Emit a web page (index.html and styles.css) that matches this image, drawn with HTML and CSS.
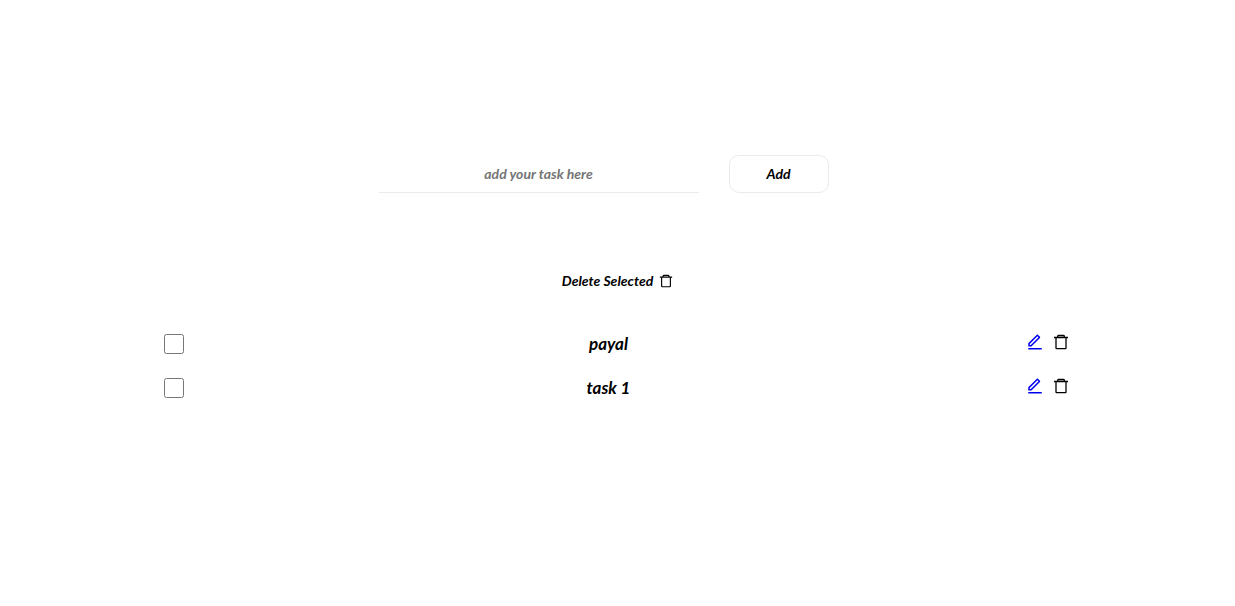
FILE: index.html
```
<!DOCTYPE html>
<html lang="en">
<head>
<meta charset="utf-8">
<title>Tasks</title>
<link rel="stylesheet" href="styles.css">
</head>
<body>
<svg class="sprite" aria-hidden="true">
  <symbol id="trash" viewBox="0 0 16 16"><path fill="none" stroke="currentColor" stroke-width="1.3" stroke-linejoin="round" d="M1 3.5H15M4.7 3.5V2.2Q4.7 1.5 5.4 1.5H10.6Q11.3 1.5 11.3 2.2V3.5M3 3.5V14Q3 14.6 3.6 14.6H12.4Q13 14.6 13 14V3.5"/></symbol>
  <symbol id="edit" viewBox="0 0 24 24"><path d="M6.414 16L16.556 5.858L15.142 4.444L5 14.586V16H6.414ZM7.243 18H3V13.757L14.435 2.322C14.826 1.932 15.459 1.932 15.849 2.322L18.678 5.151C19.068 5.541 19.068 6.174 18.678 6.565L7.243 18ZM3 20H21V22H3V20Z"/></symbol>
</svg>
<main class="page">
  <form class="add-form">
    <input class="task-input" type="text" placeholder="add your task here" aria-label="Task">
    <button class="add-button" type="button">Add</button>
  </form>
  <button class="delete-selected" type="button">Delete Selected <svg class="icon-small"><use href="#trash"/></svg></button>
  <ul class="tasks">
    <li class="task">
      <input class="check" id="task-a" type="checkbox">
      <label class="name" for="task-a">payal</label>
      <span class="actions">
        <a class="edit" href="#" aria-label="Edit payal"><svg class="icon"><use href="#edit"/></svg></a>
        <button class="delete" type="button" aria-label="Delete payal"><svg class="icon-bin"><use href="#trash"/></svg></button>
      </span>
    </li>
    <li class="task">
      <input class="check" id="task-b" type="checkbox">
      <label class="name" for="task-b">task 1</label>
      <span class="actions">
        <a class="edit" href="#" aria-label="Edit task 1"><svg class="icon"><use href="#edit"/></svg></a>
        <button class="delete" type="button" aria-label="Delete task 1"><svg class="icon-bin"><use href="#trash"/></svg></button>
      </span>
    </li>
  </ul>
</main>
</body>
</html>
```
FILE: styles.css
```
* { box-sizing: border-box; }
body { margin: 0; background: #fff; color: #000; font: italic 700 17px/20px Lato, sans-serif; }
button, input { font: inherit; color: inherit; }
button { padding: 0; border: 0; background: none; }
.sprite { display: none; }
.page { display: flex; flex-direction: column; align-items: center; padding-top: 155px; }
.add-form { display: flex; gap: 30px; margin-right: 28px; }
.task-input { width: 320px; height: 38px; padding: 0; border: 0; border-bottom: 1px solid #ebebeb; text-align: center; font-size: 14px; outline: none; }
.task-input::placeholder { color: #757575; }
.add-button { width: 100px; height: 38px; border: 1px solid #ebebeb; border-radius: 10px; font-size: 14px; }
.delete-selected { display: flex; align-items: center; gap: 6px; margin-top: 78px; font-size: 14px; }
.tasks { width: 100%; margin: 42px 0 0; padding: 0 166px 0 164px; list-style: none; display: grid; gap: 22px; }
.task { display: grid; grid-template-columns: 1fr auto 1fr; align-items: center; }
.check { width: 20px; height: 20px; margin: 0; }
.name { margin-right: 16px; }
.actions { display: flex; align-items: center; justify-content: flex-end; gap: 9px; padding-bottom: 4px; }
.edit, .delete { display: flex; }
.edit { color: #0000ee; }
.icon { width: 18px; height: 18px; fill: currentColor; }
.icon-bin { width: 16px; height: 16px; }
.icon-small { width: 14px; height: 14px; }
```
